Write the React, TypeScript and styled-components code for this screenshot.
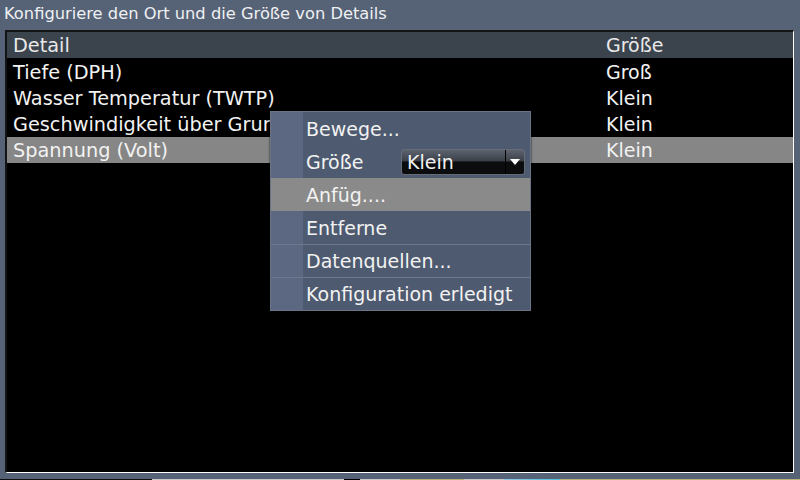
import React from 'react'
import styled, { createGlobalStyle } from 'styled-components'

const GlobalStyle = createGlobalStyle`
  html, body {
    margin: 0;
    padding: 0;
    background: #566276;
  }
  body {
    font-family: "DejaVu Sans", sans-serif;
    color: #f2f2f2;
  }
`

const rows = [
  { name: 'Tiefe (DPH)', size: 'Groß' },
  { name: 'Wasser Temperatur (TWTP)', size: 'Klein' },
  { name: 'Geschwindigkeit über Grund', size: 'Klein' },
  { name: 'Spannung (Volt)', size: 'Klein' },
]

const menuItems = [
  { label: 'Bewege...' },
  { label: 'Größe', dropdown: 'Klein' },
  { label: 'Anfüg....', active: true },
  { label: 'Entferne' },
  { label: 'Datenquellen...', divider: true },
  { label: 'Konfiguration erledigt', divider: true },
]

const App = () => {
  return (
    <Screen>
      <GlobalStyle />
      <TitleBar>Konfiguriere den Ort und die Größe von Details</TitleBar>
      <Panel>
        <HeaderRow>
          <NameCell>Detail</NameCell>
          <SizeCell>Größe</SizeCell>
        </HeaderRow>
        {rows.map((r, i) => (
          <Row key={r.name} selected={i === rows.length - 1}>
            <NameCell>{r.name}</NameCell>
            <SizeCell>{r.size}</SizeCell>
          </Row>
        ))}
        <Menu>
          {menuItems.map((m) => (
            <MenuItem key={m.label} active={m.active} divider={m.divider}>
              <MenuGutter active={m.active} />
              <MenuLabel>{m.label}</MenuLabel>
              {m.dropdown && (
                <Dropdown>
                  <DropdownValue>{m.dropdown}</DropdownValue>
                  <DropdownArrow>
                    <svg width="10" height="6" viewBox="0 0 10 6">
                      <path d="M0 0 L10 0 L5 6 Z" fill="#ffffff" />
                    </svg>
                  </DropdownArrow>
                </Dropdown>
              )}
            </MenuItem>
          ))}
        </Menu>
      </Panel>
      <GlitchLine />
    </Screen>
  )
}

export default App

const Screen = styled.div`
  width: 800px;
  height: 480px;
  display: flex;
  flex-direction: column;
  background: #566276;
  overflow: hidden;
`

const TitleBar = styled.div`
  height: 30px;
  padding: 3px 0 0 4px;
  box-sizing: border-box;
  font-size: 16.3px;
  line-height: 22px;
  color: #eef0f2;
  white-space: nowrap;
`

const Panel = styled.div`
  position: relative;
  flex: 1;
  margin: 0 6px 6px 5px;
  background: #000;
  border-top: 2px solid #121416;
  border-left: 2px solid #121416;
  border-right: 1px solid #ffffff;
  border-bottom: 1px solid #ffffff;
`

const HeaderRow = styled.div`
  display: flex;
  height: 26px;
  align-items: center;
  background: #3b434d;
  margin-bottom: 1px;
  color: #e8e8e8;
`

const Row = styled.div<{ selected?: boolean }>`
  display: flex;
  height: 26px;
  align-items: center;
  background: ${(p) => (p.selected ? '#868686' : 'transparent')};
`

const NameCell = styled.div`
  width: 593px;
  padding-left: 6px;
  font-size: 19.3px;
  white-space: nowrap;
`

const SizeCell = styled.div`
  font-size: 19px;
`

const Menu = styled.div`
  position: absolute;
  left: 263px;
  top: 79px;
  width: 259px;
  background: #4e5a6f;
  border: 1px solid #6b7487;
  box-shadow: 0 0 2px rgba(0, 0, 0, 0.8);
  display: flex;
  flex-direction: column;
`

const MenuItem = styled.div<{ active?: boolean; divider?: boolean }>`
  display: flex;
  align-items: center;
  height: 33px;
  background: ${(p) => (p.active ? '#8a8a8a' : 'transparent')};
  border-top: ${(p) => (p.divider ? '1px solid #6e7789' : 'none')};
  box-sizing: border-box;
`

const MenuGutter = styled.div<{ active?: boolean }>`
  align-self: stretch;
  width: 32px;
  background: ${(p) => (p.active ? 'transparent' : '#5c6781')};
`

const MenuLabel = styled.div`
  padding-left: 3px;
  font-size: 19px;
  white-space: nowrap;
  width: 95px;
`

const Dropdown = styled.div`
  display: flex;
  width: 124px;
  height: 26px;
  border-radius: 3px;
  border: 1px solid #666c76;
  box-sizing: border-box;
  background: linear-gradient(#5d6470 0%, #3b4048 45%, #0b0c0d 50%, #0b0c0d 100%);
  overflow: hidden;
`

const DropdownValue = styled.div`
  flex: 1;
  padding-left: 5px;
  font-size: 19px;
  line-height: 24px;
`

const DropdownArrow = styled.div`
  width: 18px;
  border-left: 1px solid #000;
  display: flex;
  align-items: center;
  justify-content: center;
`

const GlitchLine = styled.div`
  height: 1px;
  background: linear-gradient(
    90deg,
    #101010 0%,
    #101010 19%,
    #c8cacc 19%,
    #c8cacc 43%,
    #000 43%,
    #000 45%,
    #c8cacc 45%,
    #c8cacc 50%,
    #b9b37a 50%,
    #b9b37a 58%,
    #c8cacc 58%,
    #c8cacc 63%,
    #8fc7e8 63%,
    #4cc3d8 70%,
    #b9b37a 70%,
    #b9b37a 100%
  );
`
